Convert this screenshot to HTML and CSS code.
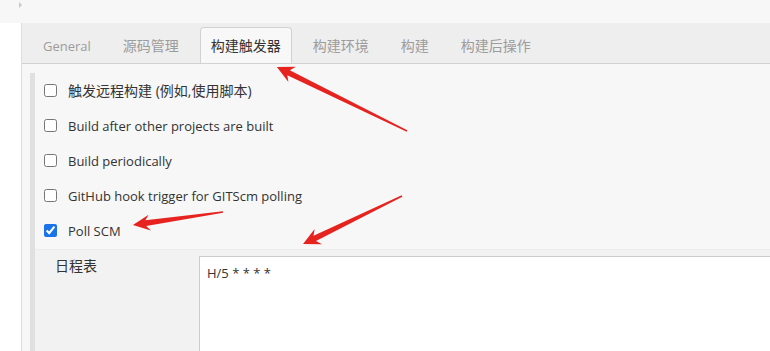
FILE: index.html
```html
<!DOCTYPE html>
<html lang="zh-CN">
<head>
<meta charset="utf-8">
<title>构建触发器</title>
<link rel="stylesheet" href="styles.css">
</head>
<body>
<div class="topbar"><span class="caret"></span></div>
<div class="main">
  <div class="panel">
    <nav class="tabs">
      <div class="tab latin">General</div>
      <div class="tab">源码管理</div>
      <div class="tab active">构建触发器</div>
      <div class="tab">构建环境</div>
      <div class="tab">构建</div>
      <div class="tab">构建后操作</div>
    </nav>
    <div class="content">
      <div class="section">
        <label class="row zh"><input type="checkbox"><span>触发远程构建 (例如,使用脚本)</span></label>
        <label class="row"><input type="checkbox"><span>Build after other projects are built</span></label>
        <label class="row"><input type="checkbox"><span>Build periodically</span></label>
        <label class="row"><input type="checkbox"><span>GitHub hook trigger for GITScm polling</span></label>
        <label class="row"><input type="checkbox" checked><span>Poll SCM</span></label>
        <div class="nested">
          <div class="field-label zh">日程表</div>
          <div class="field"><textarea class="schedule" spellcheck="false">H/5 * * * *</textarea></div>
        </div>
      </div>
    </div>
  </div>
</div>
<svg class="annotations" width="770" height="351" viewBox="0 0 770 351">
  <g fill="#e6231f">
    <g transform="translate(407 131) rotate(206.2)">
      <polygon points="0,-0.7 132,-2.8 128,-8.5 145,0 128,8.5 132,2.8 0,0.7"/>
    </g>
    <g transform="translate(223 212) rotate(171.8)">
      <polygon points="0,-0.7 78,-2.8 74,-8 91,0 74,8 78,2.8 0,0.7"/>
    </g>
    <g transform="translate(402 196) rotate(154.1)">
      <polygon points="0,-0.7 97,-2.8 93,-8.5 110,0 93,8.5 97,2.8 0,0.7"/>
    </g>
  </g>
</svg>
</body>
</html>
```
FILE: styles.css
```css
* {
  box-sizing: border-box;
}

html,
body {
  margin: 0;
  padding: 0;
}

body {
  position: relative;
  width: 770px;
  height: 351px;
  overflow: hidden;
  background: #ffffff;
  font-family: "Open Sans", "Noto Sans CJK SC", sans-serif;
  font-size: 13px;
  line-height: 18px;
  color: #333333;
}

.topbar {
  height: 23px;
  background: #f7f7f7;
  padding: 2px 0 0 19px;
}

.caret {
  display: block;
  width: 0;
  height: 0;
  border-left: 3px solid #c8c8c8;
  border-top: 3px solid transparent;
  border-bottom: 3px solid transparent;
}

.main {
  padding-left: 21px;
}

.panel {
  border-left: 1px solid #dddddd;
}

.tabs {
  display: flex;
  align-items: flex-end;
  gap: 10px;
  height: 41px;
  padding-left: 10px;
  background: #eeeeee;
  border-bottom: 1px solid #d2d2d2;
}

.tab {
  display: flex;
  align-items: center;
  height: 36px;
  padding: 0 10px;
  font-size: 14px;
  line-height: 20px;
  color: #9c9c9c;
  border: 1px solid transparent;
  border-bottom: 0;
  border-radius: 4px 4px 0 0;
  white-space: nowrap;
}

.tab.latin {
  font-size: 13px;
}

.tab.active {
  background: #f8f8f8;
  border-color: #d2d2d2;
  color: #333333;
}

.content {
  background: #f7f7f7;
  padding: 9px 0 0 8px;
  height: 300px;
}

.section {
  border-left: 5px solid #e0e0e0;
}

.row {
  display: flex;
  align-items: center;
  gap: 11px;
  height: 35px;
  padding-left: 9px;
  white-space: nowrap;
}

.row.zh {
  font-size: 14px;
}

.row input {
  width: 13px;
  height: 13px;
  margin: 0;
  accent-color: #1a73e8;
}

.nested {
  display: grid;
  grid-template-columns: 164px 1fr;
  margin-top: 1px;
  padding-top: 6px;
  height: 140px;
  background: #f2f2f2;
  border-top: 1px solid #ececec;
}

.field-label {
  padding: 0 0 0 20px;
  font-size: 14px;
  line-height: 20px;
  color: #333333;
}

.schedule {
  display: block;
  width: 100%;
  height: 130px;
  margin: 0;
  padding: 7px 7px;
  border: 1px solid #cccccc;
  border-right: 0;
  background: #ffffff;
  font-family: "Open Sans", "Noto Sans CJK SC", sans-serif;
  font-size: 13px;
  line-height: 18px;
  color: #333333;
  resize: none;
  outline: none;
}

.annotations {
  position: absolute;
  top: 0;
  left: 0;
  pointer-events: none;
}
```
